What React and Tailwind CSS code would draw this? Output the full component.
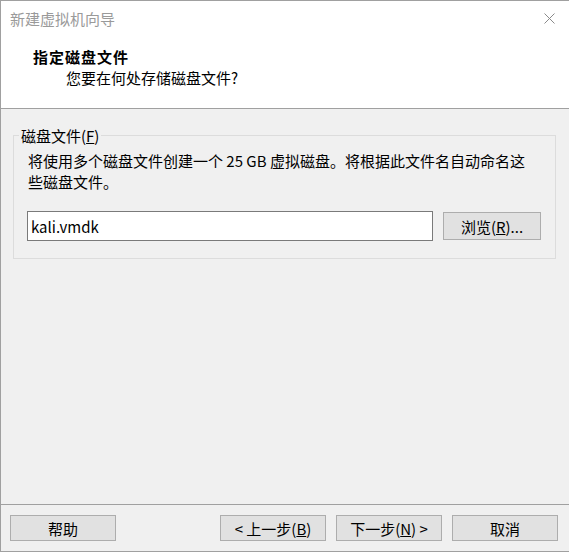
export default function App() {
  const font = { fontFamily: '"Noto Sans CJK SC", "Noto Sans", sans-serif' };
  return (
    <div
      className="w-[569px] h-[552px] flex flex-col border-l border-t border-b border-[#a0a0a0] bg-[#f0f0f0] text-[15px] text-black"
      style={font}
    >
      <div className="bg-white h-[108px] shrink-0 border-b border-[#a0a0a0] flex flex-col">
        <div className="h-[35px] flex items-center justify-between pl-[9px] pr-[14px]">
          <span className="text-[#9a9a9a] leading-[21px]">新建虚拟机向导</span>
          <svg width="11" height="11" viewBox="0 0 11 11" className="text-[#8a8a8a]">
            <path d="M0.5 0.5 L10.5 10.5 M10.5 0.5 L0.5 10.5" stroke="currentColor" strokeWidth="1" fill="none" />
          </svg>
        </div>
        <div className="pl-[32px] pt-[10px]">
          <div className="font-bold leading-[21px] tracking-[1px]">指定磁盘文件</div>
          <div className="pl-[33px] leading-[21px]">您要在何处存储磁盘文件?</div>
        </div>
      </div>

      <div className="flex-1 pl-[12px] pt-[16px]">
        <fieldset className="w-[543px] border border-[#dcdcdc] px-[13px] pb-[17px]">
          <legend className="-ml-[8px] px-[2px] leading-[21px]">
            磁盘文件(<span className="underline">F</span>)
          </legend>
          <div className="mt-[4px] pl-[1px] leading-[21px]">
            <div className="whitespace-nowrap">将使用多个磁盘文件创建一个 25 GB 虚拟磁盘。将根据此文件名自动命名这</div>
            <div className="whitespace-nowrap">些磁盘文件。</div>
          </div>
          <div className="mt-[19px] flex items-start">
            <div className="w-[406px] h-[30px] bg-white border border-[#7a7a7a] flex items-center pl-[3px] leading-[21px]">
              kali.vmdk
            </div>
            <button className="ml-[10px] mt-[1px] w-[98px] h-[28px] bg-[#e1e1e1] border border-[#adadad] flex items-center justify-center leading-[21px]">
              浏览(<span className="underline">R</span>)...
            </button>
          </div>
        </fieldset>
      </div>

      <div className="h-[47px] shrink-0 border-t border-[#a0a0a0] flex items-start pt-[10px] pl-[9px]">
        <button className="w-[106px] h-[26px] bg-[#e1e1e1] border border-[#adadad] flex items-center justify-center leading-[21px]">
          帮助
        </button>
        <button className="ml-[104px] w-[106px] h-[26px] bg-[#e1e1e1] border border-[#adadad] flex items-center justify-center leading-[21px]">
          &lt; 上一步(<span className="underline">B</span>)
        </button>
        <button className="ml-[10px] w-[106px] h-[26px] bg-[#e1e1e1] border border-[#adadad] flex items-center justify-center leading-[21px]">
          下一步(<span className="underline">N</span>) &gt;
        </button>
        <button className="ml-[10px] w-[106px] h-[26px] bg-[#e1e1e1] border border-[#adadad] flex items-center justify-center leading-[21px]">
          取消
        </button>
      </div>
    </div>
  );
}
